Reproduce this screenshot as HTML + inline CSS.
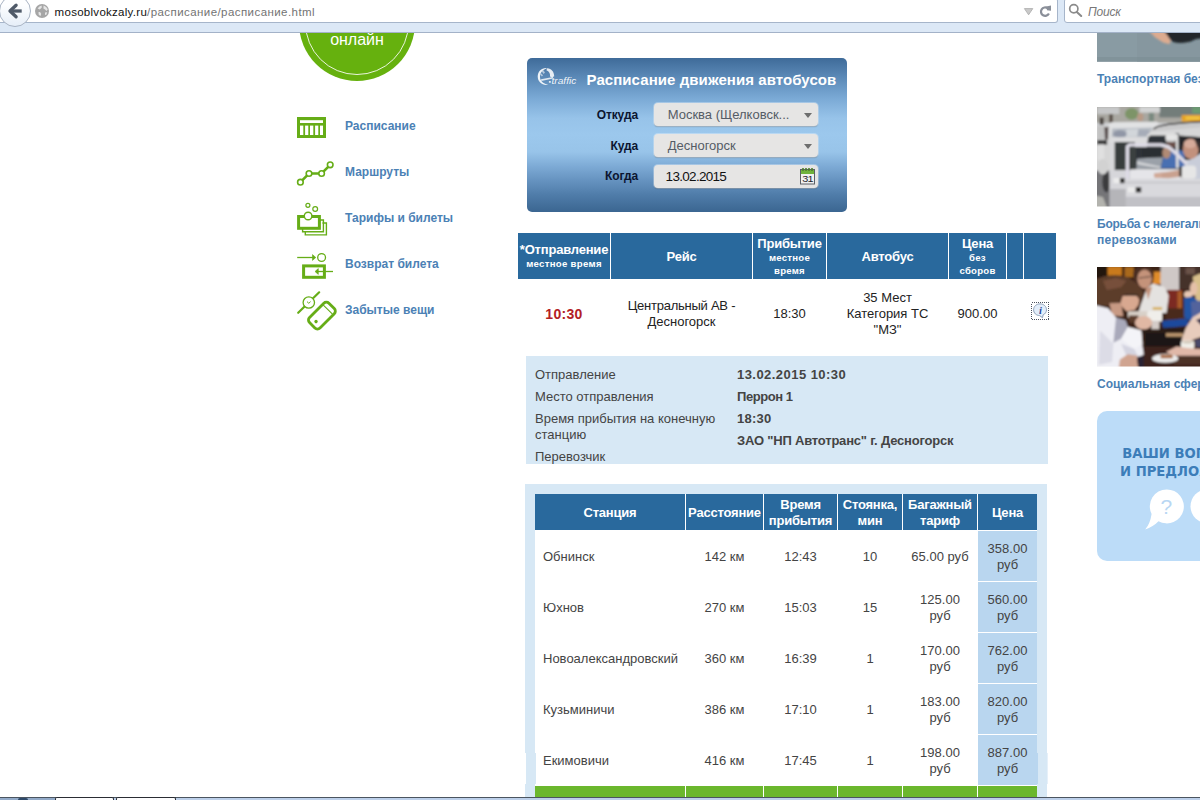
<!DOCTYPE html>
<html lang="ru">
<head>
<meta charset="utf-8">
<title>Расписание движения автобусов</title>
<style>
*{box-sizing:border-box;margin:0;padding:0}
html,body{width:1200px;height:800px;overflow:hidden;background:#fff}
body{font-family:"Liberation Sans",sans-serif;font-size:13px;line-height:16px;color:#222;position:relative}
.abs{position:absolute}
.t{position:absolute;white-space:nowrap}
svg{position:absolute;overflow:visible}

/* ---------- browser chrome ---------- */
#chrome{position:absolute;left:0;top:0;width:1200px;height:33px;background:#dce8f6;border-bottom:1px solid #a3b2c8;z-index:20}
#urlbar{position:absolute;left:0;top:-2px;width:1058px;height:25px;background:#fff;border:1px solid #a6b5ca;border-left:0;border-radius:0 3px 3px 0}
#searchbar{position:absolute;left:1064px;top:-2px;width:150px;height:25px;background:#fff;border:1px solid #a6b5ca;border-radius:3px 0 0 3px}
#back{position:absolute;left:-1px;top:-5px;width:32px;height:32px;border-radius:50%;border:1px solid #a9b4c4;background:linear-gradient(#fdfeff 30%,#e6eef8)}
.url{position:absolute;left:54.6px;top:3px;font-size:11.5px;line-height:18px;white-space:nowrap;color:#737373;letter-spacing:.43px}
.url b{font-weight:normal;color:#111;letter-spacing:.28px}
.srch{position:absolute;left:1088px;top:3px;font-size:12px;line-height:18px;font-style:italic;color:#777;letter-spacing:-.2px}

/* ---------- page ---------- */
#page{position:absolute;left:0;top:33px;width:1200px;height:764px;overflow:hidden;background:#fff}
#page .in{position:absolute;left:0;top:-33px;width:1200px;height:800px}

/* left menu */
.menu a{position:absolute;left:345px;font-weight:bold;font-size:12px;line-height:16px;color:#4b81b5;text-decoration:none;white-space:nowrap}

/* form */
#form{position:absolute;left:527px;top:58px;width:320px;height:154px;border-radius:5px;background:linear-gradient(to bottom,#3f6b99 0%,#5a88b6 12%,#7aa9d5 26%,#97c3e9 39%,#9cc8ed 50%,#98c4e9 61%,#7eabd6 70%,#6794c1 79%,#4f7ca9 89%,#3b6691 100%)}
#form h2{position:absolute;left:59.5px;top:13px;letter-spacing:.07px;font-size:15px;line-height:18px;font-weight:bold;color:#fff;white-space:nowrap}
#form label{position:absolute;right:209px;font-weight:bold;font-size:12px;line-height:16px;color:#0b1530;white-space:nowrap;letter-spacing:-.1px}
.fld{position:absolute;left:127px;width:164px;height:23px;border-radius:4px;background:#e6e5e4;box-shadow:0 0 0 1px rgba(255,255,255,.3),0 1px 1px rgba(0,0,0,.3);font-size:13px;line-height:23px;color:#555c66;padding-left:13.7px;white-space:nowrap}
.fld i{position:absolute;right:6px;top:10px;width:0;height:0;border:4px solid transparent;border-top:5px solid #6e6e6e;border-bottom:0}

/* tables */
.hd{position:absolute;background:#29699d;color:#fff;font-weight:bold;font-size:13px;line-height:16px;text-align:center;letter-spacing:-.2px}
.hd small{display:block;font-size:9.6px;line-height:12.5px;letter-spacing:.25px}
.c{position:absolute;text-align:center;font-size:13px;line-height:16px;color:#222}
.d{position:absolute;font-size:13px;line-height:16px;color:#444;white-space:nowrap}
.d.b{font-weight:bold;letter-spacing:-.2px}
.s{position:absolute;font-size:13px;line-height:16px;color:#444;text-align:center}
.pc{position:absolute;left:978px;width:59px;height:50px;background:#b9d6ef}

/* right */
.cap{position:absolute;left:1097px;font-weight:bold;font-size:12px;line-height:16px;color:#4b81b5;white-space:nowrap}
#ask{position:absolute;left:1097px;top:411px;width:300px;height:150px;border-radius:10px;background:#bcdcf8}
#ask p{position:absolute;left:0;text-align:left;font-family:"DejaVu Sans","Liberation Sans",sans-serif;font-weight:bold;font-size:13.2px;line-height:18px;color:#3c7db9;white-space:nowrap}

#taskbar{position:absolute;left:0;top:797px;width:1200px;height:3px;background:#bdd0ea;border-top:1px solid #4b5560;z-index:30}
</style>
</head>
<body>

<div id="page"><div class="in">

<!-- green round button -->
<svg style="left:299px;top:-35px" width="116" height="116" viewBox="0 0 116 116">
  <circle cx="58" cy="58" r="58" fill="#66b10e"/>
  <circle cx="58" cy="58" r="51.5" fill="none" stroke="#fff" stroke-width="1" opacity=".85"/>
</svg>
<div class="t" style="left:299px;top:30px;width:116px;text-align:center;font-size:16px;line-height:20px;color:#fff">онлайн</div>

<div class="menu">
  <a style="top:118px">Расписание</a>
  <a style="top:164px">Маршруты</a>
  <a style="top:210px">Тарифы и билеты</a>
  <a style="top:256px">Возврат билета</a>
  <a style="top:302px">Забытые вещи</a>
</div>

<!-- icon: schedule -->
<svg style="left:297px;top:117px" width="29" height="21" viewBox="0 0 29 21">
  <rect x="0" y="0" width="29" height="21" fill="#66ad17"/>
  <rect x="3" y="3.2" width="23" height="2.8" fill="#fff"/>
  <g fill="#fff"><rect x="3" y="8.6" width="3.3" height="9.4"/><rect x="8.1" y="8.6" width="3.2" height="9.4"/><rect x="13" y="8.6" width="3.3" height="9.4"/><rect x="18.1" y="8.6" width="3.2" height="9.4"/><rect x="23" y="8.6" width="3" height="9.4"/></g>
</svg>
<!-- icon: routes -->
<svg style="left:295px;top:160px" width="40" height="28" viewBox="295 160 40 28">
  <g stroke="#66ad17" fill="none">
    <path d="M300.4 182.2 L309 173.5 L321.6 173.5 L330.2 164.8" stroke-width="2.5"/>
    <g fill="#fff" stroke-width="1.6"><circle cx="300.4" cy="182.2" r="2.8"/><circle cx="309" cy="173.5" r="2.8"/><circle cx="321.6" cy="173.5" r="2.8"/><circle cx="330.2" cy="164.8" r="2.8"/></g>
  </g>
</svg>
<!-- icon: tariffs -->
<svg style="left:295px;top:200px" width="36" height="38" viewBox="295 200 36 38">
  <g stroke="#66ad17" fill="none">
    <path d="M322.5 223 H326.4 V234.9 H305.3 V232" stroke-width="1.4"/>
    <path d="M320 220 H323.4 V231.8 H302.6 V229" stroke-width="1.4"/>
    <rect x="298.6" y="216.5" width="20.8" height="11.8" stroke-width="3"/>
    <circle cx="308.1" cy="216" r="3.8" fill="#fff" stroke-width="1.4"/>
    <circle cx="307.9" cy="205.3" r="2" stroke-width="1.2"/>
    <circle cx="315.2" cy="209" r="2.4" stroke-width="1.2"/>
  </g>
</svg>
<!-- icon: return -->
<svg style="left:295px;top:250px" width="40" height="30" viewBox="295 250 40 30">
  <g stroke="#66ad17" fill="none">
    <path d="M297.2 257.5 H314" stroke-width="1.3"/>
    <path d="M312.5 254.6 L315.8 257.5 L312.5 260.4 Z" fill="#66ad17" stroke-width=".6"/>
    <circle cx="321.6" cy="257.5" r="3.9" stroke-width="1.3"/>
    <rect x="303.6" y="265.9" width="20.8" height="11.4" stroke-width="3"/>
    <path d="M316 271.5 H333" stroke-width="1.3"/>
    <path d="M318.3 268.6 L315 271.5 L318.3 274.4 Z" fill="#66ad17" stroke-width=".6"/>
  </g>
</svg>
<!-- icon: lost things -->
<svg style="left:295px;top:288px" width="44" height="44" viewBox="295 288 44 44">
  <g stroke="#66ad17" fill="none" stroke-linecap="round">
    <path d="M298.2 312.8 L319.2 292.3" stroke-width="2.2"/>
    <circle cx="308.8" cy="302.5" r="5.7" fill="#fff" stroke-width="1.3"/>
    <path d="M307.3 301.9 L308.8 303.3 L310.3 301.9" stroke-width="1"/>
    <g transform="rotate(-45 321.9 315.6)">
      <rect x="308.2" y="308.2" width="27.4" height="14.8" rx="3.6" stroke-width="2.8"/>
      <path d="M330.4 309.5 V321.7" stroke-width="1.1"/>
      <circle cx="313.6" cy="315.6" r="1.7" fill="#66ad17" stroke="none"/>
    </g>
  </g>
</svg>


<div id="form">
  <!-- e-traffic logo -->
  <svg style="left:11px;top:9px" width="40" height="20" viewBox="538 67 40 20">
    <g fill="#fff">
      <path d="M546.2 68 C541 68 537.7 72 537.7 76.6 C537.7 81.6 541.6 85 546.2 85 L548.6 84.8 C544.6 84.2 540 81.6 540 77 C540 72.8 542.6 69.8 546.8 68.6 Z" opacity=".9"/>
      <path d="M541.6 71.2 L543.2 70 L545 72.6 L543.6 74 Z M540.2 74.4 L541.6 73.4 L543 75.6 L541.8 76.6 Z" opacity=".55"/>
      <path d="M547.2 68.2 C551.4 68.4 554.2 71.8 554.2 76.2 L552 77.4 L550 76.6 C550.4 73.6 549.2 71.2 546.4 70.2 Z" opacity=".85"/>
      <path d="M541 79.3 L553 77 L553.2 78.6 L541.4 81.1 Z" opacity=".8"/>
      <rect x="548.9" y="81.2" width="1.9" height="1.4"/>
    </g>
    <text x="551.5" y="84.4" font-family="Liberation Sans, sans-serif" font-size="9" font-style="italic" fill="#fff" fill-opacity=".95" textLength="24.8" lengthAdjust="spacingAndGlyphs">traffic</text>
  </svg>
  <h2>Расписание движения автобусов</h2>
  <label style="top:49px">Откуда</label>
  <label style="top:80px">Куда</label>
  <label style="top:110px">Когда</label>
  <div class="fld" style="top:45px">Москва (Щелковск...<i></i></div>
  <div class="fld" style="top:76px">Десногорск<i></i></div>
  <div class="fld" style="top:107px;color:#111;font-size:13.5px;letter-spacing:-.7px;padding-left:11.6px">13.02.2015
    <svg style="right:3px;top:2px" width="15" height="18" viewBox="0 0 15 18">
      <rect x=".5" y="2.5" width="14" height="14.5" fill="#f1f1f1" stroke="#5c6066" stroke-width="1"/>
      <rect x="1" y="3" width="13" height="4" fill="#6fb23c"/>
      <g fill="#4f7f2c"><rect x="2.2" y="1" width="1.6" height="3"/><rect x="5.2" y="1" width="1.6" height="3"/><rect x="8.2" y="1" width="1.6" height="3"/><rect x="11.2" y="1" width="1.6" height="3"/></g>
      <text x="7.5" y="15" text-anchor="middle" font-family="Liberation Sans, sans-serif" font-size="9.5" fill="#1e242c" textLength="10.5" lengthAdjust="spacingAndGlyphs">31</text>
    </svg>
  </div>
</div>


<div class="hd" style="left:518px;top:233px;width:92px;height:46px"><span style="display:block;padding-top:9px">*Отправление<small style="letter-spacing:.3px">местное время</small></span></div>
<div class="hd" style="left:611px;top:233px;width:141px;height:46px"><span style="display:block;padding-top:16px">Рейс</span></div>
<div class="hd" style="left:753px;top:233px;width:73px;height:46px"><span style="display:block;padding-top:3px">Прибытие<small>местное<br>время</small></span></div>
<div class="hd" style="left:827px;top:233px;width:121px;height:46px"><span style="display:block;padding-top:16px">Автобус</span></div>
<div class="hd" style="left:949px;top:233px;width:57px;height:46px"><span style="display:block;padding-top:3px">Цена<small>без<br>сборов</small></span></div>
<div class="hd" style="left:1007px;top:233px;width:16px;height:46px"></div>
<div class="hd" style="left:1024px;top:233px;width:32px;height:46px"></div>
<div class="c" style="left:518px;top:305.5px;width:92px;font-weight:bold;font-size:14px;letter-spacing:.3px;color:#b32025">10:30</div>
<div class="c" style="left:611px;top:298px;width:141px"><span style="letter-spacing:-.25px">Центральный АВ -</span><br>Десногорск</div>
<div class="c" style="left:753px;top:306px;width:73px">18:30</div>
<div class="c" style="left:827px;top:290px;width:121px">35 Мест<br>Категория ТС<br>"МЗ"</div>
<div class="c" style="left:949px;top:306px;width:57px">900.00</div>
<svg style="left:1031px;top:302px" width="18" height="18" viewBox="0 0 18 18">
  <rect x=".5" y=".5" width="17" height="17" fill="none" stroke="#4d5360" stroke-width="1" stroke-dasharray="1 1" shape-rendering="crispEdges"/>
  <path d="M9 1.9 C12.9 1.9 15.5 4.5 15.5 7.8 C15.5 10 14.2 11.9 12.1 12.9 L11.5 15.7 L8.6 13.6 C5.2 13.5 2.6 11 2.6 7.8 C2.6 4.5 5.2 1.9 9 1.9 Z" fill="#e3eefb" stroke="#8fa1b9" stroke-width="1"/>
  <text x="9.4" y="11.6" text-anchor="middle" font-family="Liberation Serif, serif" font-size="10.5" font-weight="bold" font-style="italic" fill="#27489a">i</text>
</svg>


<div class="abs" style="left:526px;top:356px;width:522px;height:108px;background:#d7e8f5"></div>
<div class="d" style="left:535px;top:367px">Отправление</div>
<div class="d" style="left:535px;top:389px">Место отправления</div>
<div class="d" style="left:535px;top:411px">Время прибытия на конечную<br>станцию</div>
<div class="d" style="left:535px;top:449px">Перевозчик</div>
<div class="d b" style="left:737px;top:367px;letter-spacing:.45px">13.02.2015 10:30</div>
<div class="d b" style="left:737px;top:389px;letter-spacing:-.45px">Перрон 1</div>
<div class="d b" style="left:737px;top:411px;letter-spacing:.25px">18:30</div>
<div class="d b" style="left:737px;top:433px">ЗАО "НП Автотранс" г. Десногорск</div>


<div class="abs" style="left:525px;top:484px;width:522px;height:320px;background:#d7e8f5"></div>
<div class="abs" style="left:535px;top:494px;width:502px;height:310px;background:#fff"></div>
<div class="hd" style="left:535px;top:494px;width:150px;height:36px;padding-top:11px">Станция</div>
<div class="hd" style="left:686px;top:494px;width:77px;height:36px;padding-top:11px">Расстояние</div>
<div class="hd" style="left:764px;top:494px;width:73px;height:36px;padding-top:3px">Время<br>прибытия</div>
<div class="hd" style="left:838px;top:494px;width:64px;height:36px;padding-top:3px">Стоянка,<br>мин</div>
<div class="hd" style="left:903px;top:494px;width:74px;height:36px;padding-top:3px">Багажный<br>тариф</div>
<div class="hd" style="left:978px;top:494px;width:59px;height:36px;padding-top:11px">Цена</div>
<div class="pc" style="top:531px"></div>
<div class="s" style="left:543px;top:549px;text-align:left;white-space:nowrap">Обнинск</div>
<div class="s" style="left:686px;top:549px;width:77px">142 км</div>
<div class="s" style="left:764px;top:549px;width:73px">12:43</div>
<div class="s" style="left:838px;top:549px;width:64px">10</div>
<div class="s" style="left:903px;top:549px;width:74px">65.00 руб</div>
<div class="s" style="left:978px;top:541px;width:59px">358.00<br>руб</div>
<div class="pc" style="top:582px"></div>
<div class="s" style="left:543px;top:600px;text-align:left;white-space:nowrap">Юхнов</div>
<div class="s" style="left:686px;top:600px;width:77px">270 км</div>
<div class="s" style="left:764px;top:600px;width:73px">15:03</div>
<div class="s" style="left:838px;top:600px;width:64px">15</div>
<div class="s" style="left:903px;top:592px;width:74px">125.00<br>руб</div>
<div class="s" style="left:978px;top:592px;width:59px">560.00<br>руб</div>
<div class="pc" style="top:633px"></div>
<div class="s" style="left:543px;top:651px;text-align:left;white-space:nowrap">Новоалександровский</div>
<div class="s" style="left:686px;top:651px;width:77px">360 км</div>
<div class="s" style="left:764px;top:651px;width:73px">16:39</div>
<div class="s" style="left:838px;top:651px;width:64px">1</div>
<div class="s" style="left:903px;top:643px;width:74px">170.00<br>руб</div>
<div class="s" style="left:978px;top:643px;width:59px">762.00<br>руб</div>
<div class="pc" style="top:684px"></div>
<div class="s" style="left:543px;top:702px;text-align:left;white-space:nowrap">Кузьминичи</div>
<div class="s" style="left:686px;top:702px;width:77px">386 км</div>
<div class="s" style="left:764px;top:702px;width:73px">17:10</div>
<div class="s" style="left:838px;top:702px;width:64px">1</div>
<div class="s" style="left:903px;top:694px;width:74px">183.00<br>руб</div>
<div class="s" style="left:978px;top:694px;width:59px">820.00<br>руб</div>
<div class="pc" style="top:735px"></div>
<div class="s" style="left:543px;top:753px;text-align:left;white-space:nowrap">Екимовичи</div>
<div class="s" style="left:686px;top:753px;width:77px">416 км</div>
<div class="s" style="left:764px;top:753px;width:73px">17:45</div>
<div class="s" style="left:838px;top:753px;width:64px">1</div>
<div class="s" style="left:903px;top:745px;width:74px">198.00<br>руб</div>
<div class="s" style="left:978px;top:745px;width:59px">887.00<br>руб</div>
<div class="abs" style="left:535px;top:786px;width:150px;height:14px;background:#6bb72d"></div>
<div class="abs" style="left:686px;top:786px;width:77px;height:14px;background:#6bb72d"></div>
<div class="abs" style="left:764px;top:786px;width:73px;height:14px;background:#6bb72d"></div>
<div class="abs" style="left:838px;top:786px;width:64px;height:14px;background:#6bb72d"></div>
<div class="abs" style="left:903px;top:786px;width:74px;height:14px;background:#6bb72d"></div>
<div class="abs" style="left:978px;top:786px;width:59px;height:14px;background:#6bb72d"></div>


<!-- photo 1 (cropped) -->
<svg style="left:1097px;top:33px" width="103" height="29" viewBox="0 0 103 29">
  <defs>
    <filter id="bl" x="-10%" y="-10%" width="120%" height="120%"><feGaussianBlur stdDeviation="1.1"/></filter>
    <filter id="bl2" x="-10%" y="-10%" width="120%" height="120%"><feGaussianBlur stdDeviation="2.2"/></filter>
    <clipPath id="c1"><rect width="103" height="28.8"/></clipPath>
    <clipPath id="c2"><rect width="103" height="99.5"/></clipPath>
  </defs>
  <g clip-path="url(#c1)">
    <rect width="103" height="29" fill="#899ba3"/>
    <rect x="40" width="63" height="29" fill="#83959d" opacity=".6"/>
    <rect y="24" width="103" height="5" fill="#7b8d95" opacity=".6"/>
    <g filter="url(#bl)">
      <path d="M51 -3 L69 -3 L73.5 8 L72.4 11.2 L66 9.6 L58 4.2 Z" fill="#dcab90"/>
      <path d="M66 -3 L106 -3 L106 5.5 Q99 5 94 8.6 Q86 10.8 78 9.6 Q73.6 8.4 70.5 2.5 Z" fill="#23272c"/>
    </g>
  </g>
</svg>
<div class="cap" style="top:71px">Транспортная безопасность</div>

<!-- photo 2: taxi -->
<svg style="left:1097px;top:107px" width="103" height="100" viewBox="0 0 103 100">
  <g clip-path="url(#c2)">
    <g filter="url(#bl)">
      <rect x="-3" y="-3" width="110" height="106" fill="#cfd0d3"/>
      <rect x="-2.0" y="-2.0" width="107.6" height="17.7" fill="#a9a7a1"/>
      <rect x="-0.0" y="-0.0" width="22.3" height="7.0" fill="#c6c7c8"/>
      <rect x="62.3" y="-2.0" width="43.3" height="12.5" fill="#737d7a"/>
      <rect x="95.1" y="-0.7" width="10.5" height="7.2" fill="#6c9a72"/>
      <ellipse cx="34.7" cy="6.9" rx="6.8" ry="5.9" fill="#7d9468"/>
      <rect x="42.6" y="-0.0" width="20.3" height="5.6" fill="#d3d4d4"/>
      <ellipse cx="43.3" cy="10.1" rx="3.1" ry="4.2" fill="#b89a86"/>
      <rect x="51.8" y="5.9" width="5.2" height="8.5" fill="#7a8a80"/>
      <rect x="2.6" y="10.5" width="4.1" height="7.2" fill="#4a4440"/>
      <rect x="12.2" y="7.2" width="3.7" height="8.5" fill="#5a5048"/>
      <rect x="84.6" y="8.0" width="21.0" height="6.6" fill="#e6a223" rx="0.6"/>
      <rect x="88.6" y="9.5" width="14.4" height="3.1" fill="#f2c544"/>
      <path d="M11.1 17.7 L14.4 15.3 L59.7 14.8 L63.6 17.7 L54.4 30.8 L12.4 30.8 Z" fill="#e1e2e3"/>
      <path d="M15.1 21.6 L55.7 20.6 L51.8 30.3 L14.4 30.5 Z" fill="#b6bbc3"/>
      <path d="M29.5 22.3 L41.3 21.9 L40.0 29.5 L28.8 29.8 Z" fill="#d2d6da"/>
      <ellipse cx="22.9" cy="27.1" rx="6.8" ry="3.9" fill="#9096a6"/>
      <rect x="41.3" y="22.9" width="10.5" height="5.9" fill="#a6acb8"/>
      <rect x="-2.0" y="19.0" width="14.7" height="47.2" fill="#d6d6d6"/>
      <rect x="-0.0" y="19.0" width="7.9" height="14.4" fill="#c2c2c2"/>
      <path d="M7.4 20.3 L11.4 19.7 L11.1 32.4 L8.0 32.8 Z" fill="#544a48"/>
      <rect x="-0.0" y="33.2" width="10.1" height="4.5" fill="#353535"/>
      <rect x="0.6" y="37.4" width="6.6" height="15.7" fill="#e0e0e0"/>
      <path d="M-2.0 63.6 L13.1 63.6 L13.1 101.7 L-2.0 101.7 Z" fill="#757578"/>
      <ellipse cx="9.5" cy="74.8" rx="4.2" ry="10.5" fill="#3b3b3e"/>
      <ellipse cx="5.9" cy="59.7" rx="5.2" ry="7.9" fill="#d2d2d2"/>
      <path d="M-2.0 88.6 L5.9 89.9 L10.5 101.7 L-2.0 101.7 Z" fill="#b3b3ae"/>
      <path d="M50.5 29.5 L54.4 22.9 L61.0 19.0 L79.4 16.4 L105.6 14.8 L105.6 30.8 L82.0 30.8 Z" fill="#c9c9ca"/>
      <path d="M54.4 24.2 L105.6 20.3 L105.6 30.8 L50.5 30.8 Z" fill="#d6d6d7"/>
      <path d="M56.4 21.9 L61.0 19.3 L71.5 17.3 L89.9 15.6 L105.6 14.5" fill="none" stroke="#1e1e1e" stroke-width="1.4"/>
      <rect x="12.7" y="30.2" width="40.4" height="5.9" fill="#dcdcde"/>
      <rect x="12.7" y="35.4" width="6.3" height="30.8" fill="#d9d9db"/>
      <rect x="17.7" y="35.0" width="20.3" height="28.2" fill="#383e3e"/>
      <rect x="12.4" y="63.4" width="17.7" height="19.9" fill="#d6d6da"/>
      <rect x="12.4" y="82.0" width="17.7" height="19.7" fill="#b5b5b9"/>
      <rect x="16.4" y="71.0" width="6.8" height="5.2" fill="#ececec"/>
      <rect x="22.9" y="71.0" width="4.7" height="5.2" fill="#2e2e2e"/>
      <path d="M51.8 26.2 L82.0 26.2 L82.0 62.3 L38.7 62.3 L38.7 40.0 L49.8 40.0 Z" fill="#2f3337"/>
      <path d="M40.0 51.8 L66.2 49.8 L63.6 61.6 L39.3 62.0 Z" fill="#9ba1a9"/>
      <path d="M40.0 54.4 L63.6 59.7 L63.6 61.6 L40.0 57.1 Z" fill="#d5d7da"/>
      <rect x="32.8" y="40.0" width="6.2" height="22.6" fill="#3a4040"/>
      <rect x="45.2" y="41.3" width="19.7" height="9.2" fill="#2a2d31"/>
      <path d="M82.0 28.4 L105.6 30.2 L105.6 53.1 L82.0 53.1 Z" fill="#27282a"/>
      <path d="M66.2 50.5 L76.7 42.6 L87.2 43.9 L88.6 61.0 L63.6 61.6 Z" fill="#4a6fb2"/>
      <ellipse cx="69.5" cy="45.9" rx="4.2" ry="5.9" fill="#b08a74"/>
      <ellipse cx="74.1" cy="37.4" rx="5.0" ry="3.7" fill="#6a5048"/>
      <ellipse cx="74.1" cy="30.5" rx="5.8" ry="4.5" fill="#e6e6e6"/>
      <rect x="68.9" y="32.8" width="9.8" height="2.0" fill="#c9c9c9"/>
      <path d="M50.5 29.2 L53.1 27.1 L76.7 27.1 L80.0 28.4 L80.4 61.0" fill="none" stroke="#dedede" stroke-width="2.6"/>
      <path d="M89.9 54.4 L105.6 45.2 L105.6 73.5 L89.9 71.5 Z" fill="#c9cdd9"/>
      <ellipse cx="93.8" cy="42.0" rx="7.9" ry="10.2" fill="#c2917d"/>
      <ellipse cx="93.1" cy="36.7" rx="6.3" ry="4.5" fill="#d6ab9a"/>
      <path d="M97.7 33.4 L105.6 35.4 L105.6 45.2 L101.7 42.6 Z" fill="#3a3230"/>
      <path d="M30.4 73.1 L30.4 39.7 L32.4 37.9 L64.3 37.9 L71.5 40.0 L79.4 46.6 L89.9 57.3" fill="none" stroke="#dedbe6" stroke-width="3.4" stroke-linejoin="round"/>
      <rect x="33.2" y="62.3" width="50.1" height="10.0" fill="#e5e5e9"/>
      <path d="M57.1 66.2 L71.5 64.7 L84.6 62.6 L85.3 69.5 L71.5 71.2 L57.7 70.8 Z" fill="#c9a18f"/>
      <ellipse cx="61.0" cy="68.6" rx="4.2" ry="2.4" fill="#d2aa98"/>
      <rect x="84.6" y="58.4" width="14.7" height="13.4" fill="#e6e6e6" rx="4"/>
      <rect x="82.0" y="59.7" width="2.9" height="9.8" fill="#3a3a3a"/>
      <rect x="28.8" y="71.8" width="76.8" height="18.8" fill="#d9d9dd"/>
      <rect x="28.8" y="74.8" width="76.8" height="1.6" fill="#c6c6ca"/>
      <rect x="28.8" y="89.9" width="76.8" height="11.8" fill="#c1c1c6"/>
      <rect x="30.8" y="80.2" width="8.1" height="5.2" fill="#ececec"/>
      <rect x="38.7" y="80.2" width="5.5" height="5.2" fill="#272727"/>
    </g>
  </g>
</svg>
<div class="cap" style="top:216px"><span style="letter-spacing:-.25px">Борьба с нелегальными</span><br><span style="letter-spacing:.25px">перевозками</span></div>

<!-- photo 3: cafe -->
<svg style="left:1097px;top:267px" width="103" height="100" viewBox="0 0 103 100">
  <g clip-path="url(#c2)">
    <g filter="url(#bl)">
      <rect x="-3" y="-3" width="110" height="106" fill="#3a2218"/>
      <rect x="-2.0" y="-2.0" width="13.8" height="15.1" fill="#23150f"/>
      <rect x="10.5" y="-0.7" width="14.4" height="9.4" fill="#c97a1a"/>
      <rect x="27.5" y="-0.0" width="9.2" height="10.1" fill="#a9691f"/>
      <rect x="55.7" y="4.6" width="15.1" height="12.5" fill="#e08c2a"/>
      <ellipse cx="66.2" cy="13.5" rx="3.7" ry="3.1" fill="#f0a544"/>
      <rect x="63.6" y="-2.0" width="19.0" height="25.6" fill="#cfc8c6"/>
      <rect x="82.0" y="-2.0" width="23.6" height="24.3" fill="#44322b"/>
      <rect x="88.6" y="0.6" width="9.2" height="6.6" fill="#6a5248"/>
      <rect x="70.8" y="22.9" width="14.4" height="19.0" fill="#7c2a20"/>
      <rect x="80.4" y="24.2" width="4.5" height="24.3" fill="#a95c29"/>
      <rect x="68.9" y="41.3" width="21.0" height="11.8" fill="#4a2a1c"/>
      <path d="M36.1 5.9 L40.0 0.6 L53.1 -0.0 L57.1 5.9 L55.7 17.7 L50.5 25.6 L43.9 40.0 L37.4 41.3 L37.4 24.2 Z" fill="#4a2e22"/>
      <ellipse cx="47.6" cy="11.8" rx="7.3" ry="9.4" fill="#c4937a"/>
      <path d="M42.0 11.1 L53.8 9.5" fill="none" stroke="#3a2a24" stroke-width="0.8"/>
      <path d="M43.9 37.4 L49.8 21.6 L55.7 16.4 L67.6 20.0 L71.8 28.8 L69.5 45.9 L41.3 45.9 Z" fill="#e4e2e0"/>
      <path d="M48.5 21.6 L55.1 19.7 L51.1 32.8 Z" fill="#c2927a"/>
      <path d="M95.8 9.8 L103.0 6.5 L105.6 7.2 L105.6 37.4 L99.0 36.1 L97.7 24.2 Z" fill="#d8c08c"/>
      <ellipse cx="96.7" cy="21.6" rx="3.7" ry="6.8" fill="#e4c0a8"/>
      <ellipse cx="91.2" cy="27.5" rx="4.2" ry="3.4" fill="#e8c8b4"/>
      <path d="M87.0 31.1 L95.4 29.5 L105.6 37.4 L105.6 53.8 L92.5 53.8 L87.2 50.5 Z" fill="#2454a4"/>
      <path d="M93.8 34.7 L105.6 33.4 L105.6 53.1 L95.1 53.1 Z" fill="#53649c"/>
      <path d="M64.7 53.8 L89.9 51.5 L92.8 58.6 L66.2 61.3 Z" fill="#1f4a9c"/>
      <rect x="45.2" y="60.7" width="60.4" height="6.2" fill="#2a1a14"/>
      <rect x="47.9" y="66.2" width="40.7" height="13.8" fill="#1b1517"/>
      <rect x="68.9" y="66.2" width="17.3" height="3.4" fill="#c09a70"/>
      <rect x="41.3" y="79.4" width="64.3" height="22.3" fill="#3c241c"/>
      <rect x="76.7" y="89.9" width="28.9" height="7.9" fill="#4e3226"/>
      <rect x="30.8" y="44.2" width="21.0" height="6.6" fill="#d8d0c8" rx="1"/>
      <rect x="32.1" y="48.5" width="9.2" height="7.2" fill="#5a3a2c"/>
      <rect x="55.7" y="40.0" width="9.4" height="2.9" fill="#d8b460"/>
      <rect x="50.2" y="43.9" width="15.0" height="10.8" fill="#f0eeea" rx="2"/>
      <rect x="54.4" y="54.4" width="7.9" height="7.9" fill="#d4ccc8"/>
      <path d="M105.6 44.6 L95.8 50.2 L88.8 61.0 L84.6 72.8 L87.5 77.0 L97.7 72.1 L105.6 69.5 Z" fill="#e8ccbc"/>
      <path d="M99.0 53.1 L105.6 50.5 L105.6 59.7 Z" fill="#3a3450"/>
      <path d="M97.7 72.8 L105.6 71.5 L105.6 80.7 L99.0 80.0 Z" fill="#4a4a6a"/>
      <rect x="84.0" y="73.6" width="13.4" height="8.7" fill="#f0eee8" rx="2.5"/>
      <ellipse cx="90.7" cy="75.2" rx="5.2" ry="1.2" fill="#cfc6b8"/>
      <path d="M68.9 84.9 L79.6 79.4 L89.9 80.9 L105.6 82.3 L105.6 88.8 L76.7 88.8 Z" fill="#e0b8a8"/>
      <ellipse cx="68.2" cy="91.4" rx="13.1" ry="4.3" fill="#ececec"/>
      <rect x="63.6" y="87.8" width="12.1" height="3.4" fill="#a86a40" rx="0.6"/>
      <path d="M-0.0 11.8 L7.2 9.2 L17.7 8.2 L30.8 10.1 L41.3 17.7 L46.8 27.1 L43.3 32.4 L37.4 27.1 L24.9 28.4 L21.9 36.3 L11.1 38.9 L-2.0 38.0 L-2.0 12.4 Z" fill="#5c3c2c"/>
      <path d="M5.9 13.7 L19.0 11.1 L29.5 13.7 L24.2 20.3 L9.8 22.9 Z" fill="#77503a"/>
      <path d="M25.6 29.0 L38.9 27.7 L42.2 32.4 L41.6 37.6 L37.6 42.9 L29.5 44.2 L22.9 37.6 Z" fill="#d8a890"/>
      <path d="M12.4 36.3 L24.2 36.1 L26.2 49.2 L15.1 48.5 Z" fill="#c89a84"/>
      <path d="M27.9 27.7 L41.0 28.4" fill="none" stroke="#2a2220" stroke-width="1.1"/>
      <path d="M-2.0 38.0 L11.1 41.3 L19.0 50.5 L30.8 59.9 L44.2 63.6 L45.5 79.4 L46.8 87.5 L37.4 92.8 L24.2 101.7 L-2.0 101.7 Z" fill="#eeeef4"/>
      <path d="M19.0 50.5 L28.4 53.1 L31.1 59.9 L24.2 71.8 L16.4 75.7 Z" fill="#a9a9ba"/>
      <path d="M3.2 63.6 L16.4 76.7 L15.1 95.1 L1.9 97.7 Z" fill="#dcdce6"/>
      <path d="M30.8 59.9 L44.2 63.6 L45.5 76.7 L37.4 82.0 L24.2 71.8 Z" fill="#f4f4f8"/>
      <path d="M24.2 76.7 L37.4 82.0 L41.3 89.9 L32.1 95.1 Z" fill="#d4d4e0"/>
      <ellipse cx="46.6" cy="55.7" rx="8.7" ry="6.8" fill="#e0b8a4"/>
      <path d="M22.9 92.5 L30.8 87.2 L40.0 88.6 L41.3 101.7 L21.6 101.7 Z" fill="#d0a490"/>
      <path d="M40.0 89.9 L46.8 88.6 L46.8 101.7 L41.3 101.7 Z" fill="#2c2030"/>
    </g>
  </g>
</svg>
<div class="cap" style="top:376px">Социальная сфера</div>

<div id="ask">
  <p style="top:34px;left:25.3px">ВАШИ ВОПРОСЫ</p>
  <p style="top:52px;left:23px">И ПРЕДЛОЖЕНИЯ</p>
  <svg style="left:40px;top:75px" width="80" height="50" viewBox="1137 486 80 50">
    <path d="M1166.7 489.4 A17 17 0 1 1 1158.5 521.2 Q1154 526 1145.2 529.6 Q1150.2 523.6 1151.6 514 A17 17 0 0 1 1166.7 489.4 Z" fill="#fff"/>
    <text x="1166.4" y="513.6" text-anchor="middle" font-family="Liberation Sans, sans-serif" font-size="21" fill="#b9d7f3">?</text>
    <circle cx="1207.5" cy="506.3" r="17" fill="#fff"/>
    <text x="1206" y="513.6" text-anchor="middle" font-family="Liberation Sans, sans-serif" font-size="21" fill="#b9d7f3">!</text>
  </svg>
</div>

<div class="abs" style="left:525px;top:753px;width:1px;height:31px;background:#fff"></div>
<div class="abs" style="left:535px;top:753px;width:1px;height:31px;background:#d7e8f5"></div>
<div class="abs" style="left:1037px;top:753px;width:1px;height:31px;background:#b9d6ef"></div>
<div class="abs" style="left:1047px;top:753px;width:1px;height:31px;background:#e6f0f9"></div>
</div></div>

<div id="chrome">
  <div id="urlbar"></div>
  <div id="searchbar"></div>
  <div id="back"></div>
  
  <svg style="left:0;top:0" width="1200" height="24" viewBox="0 0 1200 24">
    <!-- back arrow -->
    <path d="M16.1 5.2 L10 11 L16.1 16.8" fill="none" stroke="#4f5a69" stroke-width="3.3" stroke-linejoin="round" stroke-linecap="round"/>
    <path d="M10.6 11 H21.7" fill="none" stroke="#4f5a69" stroke-width="3.3"/>
    <!-- globe -->
    <circle cx="42" cy="11" r="7" fill="#a6a6a6"/>
    <path d="M37.6 8.6 Q39.2 6.2 41.6 5.6 L41.8 7.4 L39.8 9.4 Z M43.6 5.4 Q46.6 6.4 47.8 9.2 L46.6 11 L45 9.4 L43.4 8.6 Z M38.4 12.2 L40 12 L41.2 13.8 L40.6 16 L38.8 15 Z M45 12.4 L47.2 12.2 L46.4 14.8 L45 15 Z" fill="#e6e6e6"/>
    <!-- dropdown -->
    <path d="M1024.4 8.6 H1032.8 L1028.6 14.8 Z" fill="#c9c9c9" stroke="#a8a8a8" stroke-width=".8"/>
    <!-- reload -->
    <path d="M1048.9 13.6 A4.2 4.2 0 1 1 1047.6 8.2" fill="none" stroke="#8a8f99" stroke-width="2.2"/>
    <path d="M1046.2 6.4 L1051 5.4 V10.8 L1047 10.2 Z" fill="#8a8f99"/>
    <!-- magnifier -->
    <circle cx="1073.8" cy="8.8" r="4.1" fill="none" stroke="#8b8b8b" stroke-width="1.7"/>
    <path d="M1076.8 12 L1081.2 16" stroke="#8b8b8b" stroke-width="2.1" stroke-linecap="round"/>
  </svg>

  <div class="url"><b>mosoblvokzaly.ru</b>/расписание/расписание.html</div>
  <div class="srch">Поиск</div>
</div>

<div id="taskbar">
  <div class="abs" style="left:0;top:0;width:55px;height:2px;background:#93abc9"></div>
  <div class="abs" style="left:18px;top:0;width:10px;height:2px;background:#2f4a6a;border-radius:4px 4px 0 0"></div>
  <div class="abs" style="left:55px;top:-1px;width:59px;height:3px;background:#fdfdfe;border:1px solid #2a2d33;border-bottom:0;border-radius:2px 2px 0 0"></div>
  <div class="abs" style="left:116px;top:-1px;width:60px;height:3px;background:#fdfdfe;border:1px solid #2a2d33;border-bottom:0;border-radius:2px 2px 0 0"></div>
</div>
</body>
</html>
